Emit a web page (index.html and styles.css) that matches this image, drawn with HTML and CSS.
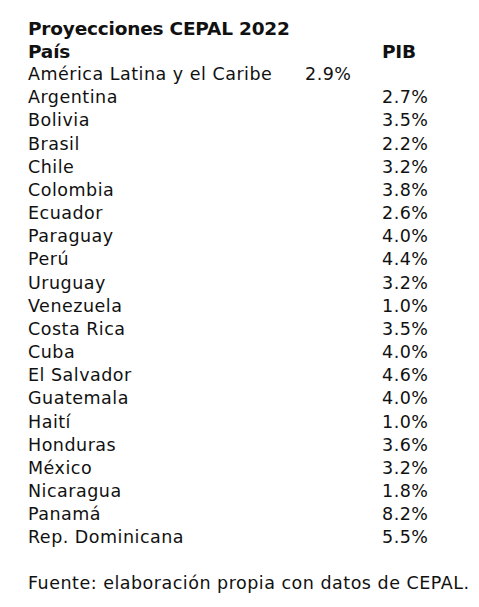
FILE: index.html
```html
<!DOCTYPE html>
<html lang="es">
<head>
<meta charset="utf-8">
<title>Proyecciones CEPAL 2022</title>
<link rel="stylesheet" href="styles.css">
</head>
<body>
<main class="card">
  <h1 class="title">Proyecciones CEPAL 2022</h1>
  <div class="table">
    <div class="hcell name">País</div><div class="hcell pib">PIB</div>
    <div class="name">América Latina y el Caribe</div><div class="mid">2.9%</div>
    <div class="name">Argentina</div><div class="pib">2.7%</div>
    <div class="name">Bolivia</div><div class="pib">3.5%</div>
    <div class="name">Brasil</div><div class="pib">2.2%</div>
    <div class="name">Chile</div><div class="pib">3.2%</div>
    <div class="name">Colombia</div><div class="pib">3.8%</div>
    <div class="name">Ecuador</div><div class="pib">2.6%</div>
    <div class="name">Paraguay</div><div class="pib">4.0%</div>
    <div class="name">Perú</div><div class="pib">4.4%</div>
    <div class="name">Uruguay</div><div class="pib">3.2%</div>
    <div class="name">Venezuela</div><div class="pib">1.0%</div>
    <div class="name">Costa Rica</div><div class="pib">3.5%</div>
    <div class="name">Cuba</div><div class="pib">4.0%</div>
    <div class="name">El Salvador</div><div class="pib">4.6%</div>
    <div class="name">Guatemala</div><div class="pib">4.0%</div>
    <div class="name">Haití</div><div class="pib">1.0%</div>
    <div class="name">Honduras</div><div class="pib">3.6%</div>
    <div class="name">México</div><div class="pib">3.2%</div>
    <div class="name">Nicaragua</div><div class="pib">1.8%</div>
    <div class="name">Panamá</div><div class="pib">8.2%</div>
    <div class="name">Rep. Dominicana</div><div class="pib">5.5%</div>
  </div>
  <p class="source">Fuente: elaboración propia con datos de CEPAL.</p>
</main>
</body>
</html>
```
FILE: styles.css
```css
html, body {
  margin: 0;
  padding: 0;
  background: #fff;
}
body {
  font-family: "DejaVu Sans", "Open Sans", sans-serif;
  color: #111;
}
.card {
  padding: 17px 0 0 28px;
}
.title {
  margin: 0;
  font-size: 18.5px;
  font-weight: 700;
  letter-spacing: -0.2px;
  line-height: 23px;
}
.table {
  display: grid;
  grid-template-columns: 277px 77px 1fr;
  font-size: 17.5px;
  letter-spacing: 0.5px;
  line-height: 23.15px;
}
.name { grid-column: 1; }
.mid { grid-column: 2; }
.pib { grid-column: 3; }
.hcell {
  font-size: 18.5px;
  font-weight: 700;
  letter-spacing: -0.2px;
}
.source {
  margin: 23px 0 0;
  font-size: 17.5px;
  letter-spacing: 0.5px;
  line-height: 23px;
}
```
